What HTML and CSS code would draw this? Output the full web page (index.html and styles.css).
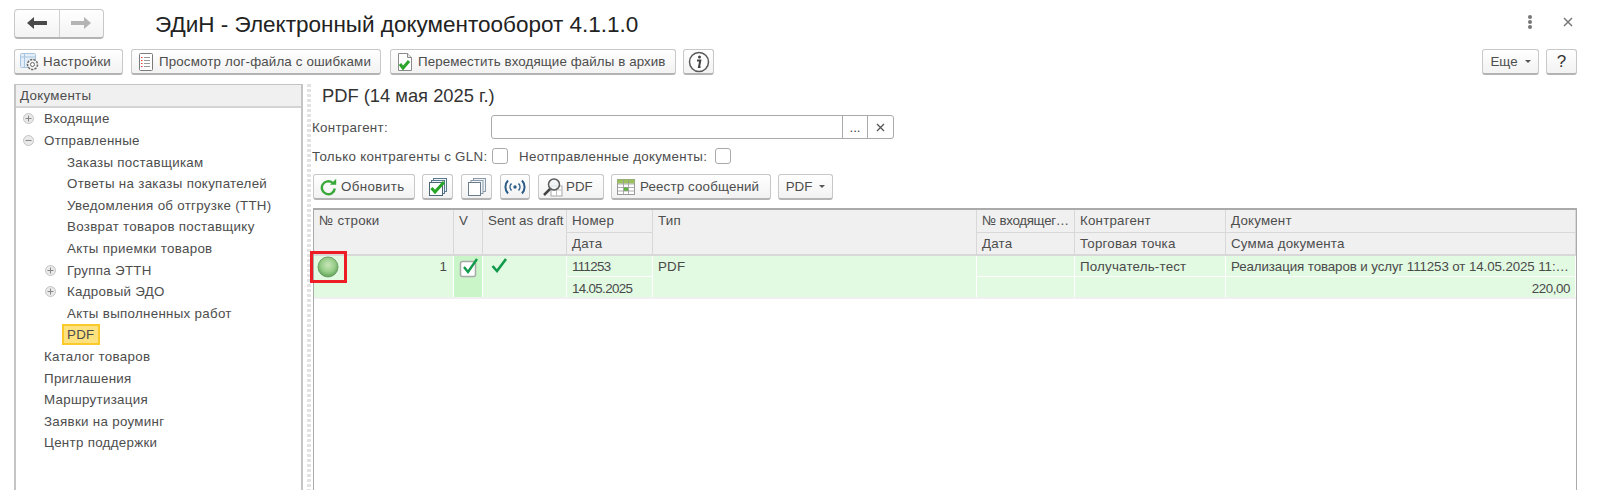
FILE: index.html
```html
<!DOCTYPE html>
<html lang="ru">
<head>
<meta charset="utf-8">
<title>ЭДиН</title>
<link rel="stylesheet" href="styles.css">
</head>
<body>
<div class="app">
  <header class="head">
    <div class="nav">
      <span class="nav-b"><svg width="22" height="14" viewBox="0 0 22 14"><path d="M1 7l7-6v4h13v4H8v4z" fill="#4a4a4a"/></svg></span>
      <span class="nav-b"><svg width="22" height="14" viewBox="0 0 22 14"><path d="M21 7l-7-6v4H1v4h13v4z" fill="#b4b4b4"/></svg></span>
    </div>
    <h1 class="title">ЭДиН - Электронный документооборот 4.1.1.0</h1>
    <span class="dots"><i></i><i></i><i></i></span>
    <svg class="close" width="10" height="10" viewBox="0 0 10 10"><path d="M1 1l8 8M9 1l-8 8" stroke="#777" stroke-width="1.5"/></svg>
  </header>

  <div class="bar">
    <button class="btn w-set"><svg width="20" height="20" viewBox="0 0 20 20"><rect x=".5" y="1.500" width="15" height="14" rx="1" fill="#e4eef8" stroke="#a8c4de"/><path d="M1 5h14M4.500 2v13" stroke="#a8c4de"/><circle cx="12.500" cy="12.500" r="5" fill="#f4f4f4" stroke="#666" stroke-width="1.500" stroke-dasharray="2.300 1.100"/><circle cx="12.500" cy="12.500" r="2" fill="#fff" stroke="#666"/></svg>Настройки</button>
    <button class="btn w-log"><svg width="16" height="20" viewBox="0 0 16 20"><rect x="1.500" y="1.500" width="13" height="17" rx="1" fill="#fff" stroke="#7a7a7a"/><path d="M6 5.500h6M6 8.500h6M6 11.500h6M6 14.500h6" stroke="#9a9a9a"/><path d="M3 5.500h1.500M3 8.500h1.500M3 11.500h1.500M3 14.500h1.500" stroke="#e0403a"/></svg>Просмотр лог-файла с ошибками</button>
    <button class="btn w-mov"><svg width="16" height="20" viewBox="0 0 16 20"><path d="M1.500 1.500h9l4 4v13h-13z" fill="#fff" stroke="#8a8a8a"/><path d="M10.500 1.500v4h4" fill="#e8e8e8" stroke="#8a8a8a"/><path d="M3 12l3 4 6-7" fill="none" stroke="#2aa52a" stroke-width="3"/></svg>Переместить входящие файлы в архив</button>
    <button class="btn w-ico"><svg width="22" height="22" viewBox="0 0 22 22"><circle cx="11" cy="11" r="9.500" fill="#fff" stroke="#5a5a5a" stroke-width="1.500"/><circle cx="11.500" cy="6" r="1.500" fill="#444"/><path d="M9 9.500h3.300l-1.300 6.500h1.500" fill="none" stroke="#444" stroke-width="2"/></svg></button>
    <div class="bar-end">
      <button class="btn w-more">Еще<span class="caret"></span></button>
      <button class="btn w-ico q">?</button>
    </div>
  </div>

  <main class="main">
    <aside class="side">
      <div class="side-h">Документы</div>
      <ul class="tree">
        <li class="n1"><svg class="tg" width="11" height="11" viewBox="0 0 11 11"><circle cx="5.500" cy="5.500" r="5" fill="#e9e9e9" stroke="#c4c4c4"/><path d="M2.500 5.500h6M5.500 2.500v6" stroke="#888"/></svg>Входящие</li>
        <li class="n1"><svg class="tg" width="11" height="11" viewBox="0 0 11 11"><circle cx="5.500" cy="5.500" r="5" fill="#e9e9e9" stroke="#c4c4c4"/><path d="M2.500 5.500h6" stroke="#888"/></svg>Отправленные</li>
        <li class="n2">Заказы поставщикам</li>
        <li class="n2">Ответы на заказы покупателей</li>
        <li class="n2">Уведомления об отгрузке (ТТН)</li>
        <li class="n2">Возврат товаров поставщику</li>
        <li class="n2">Акты приемки товаров</li>
        <li class="n2"><svg class="tg" width="11" height="11" viewBox="0 0 11 11"><circle cx="5.500" cy="5.500" r="5" fill="#e9e9e9" stroke="#c4c4c4"/><path d="M2.500 5.500h6M5.500 2.500v6" stroke="#888"/></svg>Группа ЭТТН</li>
        <li class="n2"><svg class="tg" width="11" height="11" viewBox="0 0 11 11"><circle cx="5.500" cy="5.500" r="5" fill="#e9e9e9" stroke="#c4c4c4"/><path d="M2.500 5.500h6M5.500 2.500v6" stroke="#888"/></svg>Кадровый ЭДО</li>
        <li class="n2">Акты выполненных работ</li>
        <li class="n2"><span class="sel">PDF</span></li>
        <li class="n1">Каталог товаров</li>
        <li class="n1">Приглашения</li>
        <li class="n1">Маршрутизация</li>
        <li class="n1">Заявки на роуминг</li>
        <li class="n1">Центр поддержки</li>
      </ul>
    </aside>
    <div class="split"></div>
    <section class="content">
      <h2 class="sub">PDF (14 мая 2025 г.)</h2>
      <div class="row-f">
        <label class="lbl l-k">Контрагент:</label>
        <div class="input"><span class="in-main"></span><span class="in-b">...</span><span class="in-b in-x"><svg width="9" height="9" viewBox="0 0 9 9"><path d="M1 1l7 7M8 1l-7 7" stroke="#555" stroke-width="1.300"/></svg></span></div>
      </div>
      <div class="row-c">
        <label class="lbl l-g">Только контрагенты с GLN:</label><span class="cb"></span>
        <label class="lbl l-n">Неотправленные документы:</label><span class="cb"></span>
      </div>
      <div class="bar2">
        <button class="btn b-upd"><svg width="17" height="18" viewBox="0 0 17 18"><path d="M14.800 10.500a6.500 6.500 0 1 1-2.200-5.700" fill="none" stroke="#3aa83a" stroke-width="2.400"/><path d="M10 6.700h6.200V.8z" fill="#3aa83a"/></svg>Обновить</button>
        <button class="btn w-ico"><svg width="22" height="20" viewBox="0 0 22 20"><rect x="6.500" y="1.500" width="13" height="13" fill="#eef3f8" stroke="#5a7a90"/><rect x="4.500" y="3.500" width="13" height="13" fill="#eef3f8" stroke="#5a7a90"/><rect x="2.500" y="5.500" width="13" height="13" fill="#fff" stroke="#4a6478"/><path d="M4.500 11l3.500 4 9-10" fill="none" stroke="#27a527" stroke-width="3"/></svg></button>
        <button class="btn w-ico b-m"><svg width="22" height="20" viewBox="0 0 22 20"><rect x="7.500" y="1.500" width="12" height="13" fill="#eef3f8" stroke="#8a9aa8"/><rect x="5" y="3.500" width="12" height="13" fill="#f2f6fa" stroke="#8a9aa8"/><rect x="2.500" y="5.500" width="12" height="13" fill="#fff" stroke="#6c7c8a"/></svg></button>
        <button class="btn w-wave b-m"><svg width="22" height="16" viewBox="0 0 22 16"><circle cx="11" cy="8" r="1.700" fill="#2c5c86"/><path d="M7.500 4.500a5 5 0 0 0 0 7M14.500 4.500a5 5 0 0 1 0 7" fill="none" stroke="#2c5c86" stroke-width="1.500"/><path d="M4 1.500a9.500 9.500 0 0 0 0 13M18 1.500a9.500 9.500 0 0 1 0 13" fill="none" stroke="#2c5c86" stroke-width="2"/></svg></button>
        <button class="btn b-pdf b-m"><svg width="20" height="20" viewBox="0 0 20 20"><rect x="8" y="9" width="11" height="10" fill="#fff" stroke="#a8a8a8"/><path d="M8 13h11M13.500 9v10" stroke="#c0c0c0"/><circle cx="11" cy="7.500" r="5.500" fill="#eef3f6" fill-opacity=".8" stroke="#5a5a5a" stroke-width="1.500"/><path d="M7 12l-6 6" stroke="#444" stroke-width="2.500"/></svg>PDF</button>
        <button class="btn b-reg"><svg width="18" height="16" viewBox="0 0 18 16"><rect x=".5" y=".5" width="17" height="15" fill="#fff" stroke="#9a9a9a"/><rect x=".5" y=".5" width="17" height="4" fill="#9ac25a"/><rect x="6.500" y="8" width="5" height="4" fill="#5cb83c"/><path d="M1 5h16M1 8.500h16M1 12h16M6.500 1v14M11.500 1v14" stroke="#9a9a9a" stroke-width=".8"/></svg>Реестр сообщений</button>
        <button class="btn b-drop">PDF<span class="caret"></span></button>
      </div>
      <div class="table">
        <div class="hc sp"><span>№ строки</span></div>
        <div class="hc sp"><span>V</span></div>
        <div class="hc sp"><span class="draft">Sent as draft</span></div>
        <div class="hc"><span>Номер</span></div>
        <div class="hc sp"><span>Тип</span></div>
        <div class="hc"><span class="tight">№ входящег…</span></div>
        <div class="hc"><span>Контрагент</span></div>
        <div class="hc"><span>Документ</span></div>
        <div class="hc h2 col4"><span>Дата</span></div>
        <div class="hc h2 col6"><span>Дата</span></div>
        <div class="hc h2"><span>Торговая точка</span></div>
        <div class="hc h2"><span>Сумма документа</span></div>

        <div class="bc sp b1"><svg class="ball" width="22" height="22" viewBox="0 0 22 22"><defs><radialGradient id="g" cx=".5" cy=".4" r=".6"><stop offset="0" stop-color="#c8e6b8"/><stop offset=".6" stop-color="#96cc88"/><stop offset="1" stop-color="#5fa055"/></radialGradient></defs><circle cx="11" cy="11" r="10" fill="url(#g)" stroke="#6f9f68"/></svg><span class="num">1</span><span class="mark"></span></div>
        <div class="bc sp bv"><svg width="24" height="22" viewBox="0 0 24 22"><rect x="2.500" y="5.500" width="15" height="15" rx="2" fill="#fff" stroke="#a9a9a9" stroke-width="1.500"/><path d="M6 11l4 5 9-13" fill="none" stroke="#129a4c" stroke-width="2.400"/></svg></div>
        <div class="bc sp"><svg class="tick" width="17" height="15" viewBox="0 0 17 15"><path d="M1.500 8l4.500 5 9-12" fill="none" stroke="#129a4c" stroke-width="2.600"/></svg></div>
        <div class="bc"><span class="dg">111253</span></div>
        <div class="bc sp"><span>PDF</span></div>
        <div class="bc"></div>
        <div class="bc"><span>Получатель-тест</span></div>
        <div class="bc"><span class="doc">Реализация товаров и услуг 111253 от 14.05.2025 11:…</span></div>
        <div class="bc b2 col4"><span class="dg">14.05.2025</span></div>
        <div class="bc b2 col6"></div>
        <div class="bc b2"></div>
        <div class="bc b2 right"><span class="sum">220,00</span></div>
        <div class="strip"></div>
      </div>
    </section>
  </main>
</div>
</body>
</html>
```
FILE: styles.css
```css
* { box-sizing: border-box; }
html, body { margin: 0; padding: 0; }
body { width: 1600px; height: 490px; overflow: hidden; background: #fff; font: 13.33px "Liberation Sans", Arial, sans-serif; color: #4d4d4d; }
.app { display: flex; flex-direction: column; height: 490px; }

.head { display: flex; align-items: center; height: 49px; padding: 9px 0 11px 14px; }
.nav { display: flex; width: 90px; height: 30px; border: 1px solid #c8c8c8; border-bottom: 2px solid #b4b4b4; border-radius: 4px; background: linear-gradient(#fff, #f3f3f3); }
.nav-b { flex: 1; display: flex; align-items: center; justify-content: center; }
.nav-b + .nav-b { border-left: 1px solid #d0d0d0; }
.title { margin: 3px 0 0 51px; font-size: 22.5px; font-weight: 400; color: #222; white-space: nowrap; }
.dots { display: flex; flex-direction: column; gap: 1px; margin-left: auto; margin-top: -4px; }
.dots i { width: 4px; height: 4px; border-radius: 50%; background: #777; display: block; }
.close { margin: -4px 27px 0 31px; }

.bar { display: flex; gap: 7px; height: 26px; padding: 0 23px 0 14px; }
.bar-end { display: flex; gap: 7px; margin-left: auto; }
.btn { display: inline-flex; flex: none; align-items: center; justify-content: center; gap: 3px; height: 26px; padding: 0; border: 1px solid #c8c8c8; border-bottom: 2px solid #b4b4b4; border-radius: 3px; background: linear-gradient(#fff, #f2f2f2); font: inherit; color: #4d4d4d; white-space: nowrap; }
.w-set { width: 109px; justify-content: flex-start; padding-left: 5px; gap: 3px; letter-spacing: .3px; }
.w-log { width: 250px; margin-left: 1px; justify-content: flex-start; padding-left: 6px; gap: 5px; letter-spacing: .15px; }
.w-mov { width: 286px; margin-left: 2px; justify-content: flex-start; padding-left: 6px; gap: 5px; letter-spacing: .1px; }
.w-ico { width: 31px; }
.w-more { width: 57px; gap: 7px; }
.q { font-size: 17px; color: #333; }
.caret { width: 0; height: 0; border: 3px solid transparent; border-top-color: #555; border-bottom: 0; }

.main { flex: 1; display: flex; padding: 9px 23px 0 14px; min-height: 0; }
.side { width: 289px; border: 2px solid #c4c4c4; border-bottom: 0; border-top-width: 1px; letter-spacing: .3px; }
.side-h { height: 23px; padding: 3px 4px; background: #f0f0f0; border-bottom: 2px solid #d4d4d4; }
.tree { list-style: none; margin: 0; padding: .4px 0 0; }
.tree li { position: relative; height: 21.6px; line-height: 21.6px; white-space: nowrap; }
.n1 { padding-left: 28px; }
.n2 { padding-left: 51px; }
.tg { position: absolute; top: 5px; }
.n1 .tg { left: 7px; }
.n2 .tg { left: 29px; }
.sel { display: inline-block; height: 21px; line-height: 17px; margin: 0 0 0 -5px; padding: 0 3px; background: #fde27f; border: 2px solid #fcc92b; }
.split { width: 4px; margin-left: 4px; background: repeating-linear-gradient(#e2e2e2 0 3px, #fff 3px 5px); }
.content { flex: 1; min-width: 0; margin-left: 2px; position: relative; }

.sub { margin: 0 0 0 9px; height: 25px; font-size: 18.33px; line-height: 24px; font-weight: 400; color: #333; }
.row-f { display: flex; align-items: center; height: 24px; margin-top: 6px; }
.lbl { white-space: nowrap; letter-spacing: .3px; }
.l-k { width: 179px; margin-left: -1px; }
.input { display: flex; width: 403px; height: 24px; border: 1px solid #aaa; border-radius: 3px; }
.in-main { flex: 1; }
.in-b { width: 25px; display: flex; align-items: center; justify-content: center; border-left: 1px solid #aaa; color: #444; }
.in-x { width: 26px; }
.row-c { display: flex; align-items: center; height: 16px; margin-top: 9px; }
.cb { flex: none; width: 16px; height: 16px; margin-left: 7px; border: 1px solid #aaa; border-radius: 3px; background: #fff; }
.l-g { width: 173px; margin-left: -1px; }
.l-n { width: 189px; margin-left: 11px; }
.bar2 { display: flex; gap: 7px; height: 26px; margin-top: 10px; }
.b-m { margin-left: 1px; }
.b-upd { width: 102px; justify-content: flex-start; padding-left: 6px; gap: 4px; letter-spacing: .4px; }
.w-wave { width: 30px; }
.b-pdf { width: 66px; justify-content: flex-start; padding-left: 4px; gap: 3px; }
.b-reg { width: 160px; justify-content: flex-start; padding-left: 5px; gap: 5px; letter-spacing: .15px; }
.b-drop { width: 55px; gap: 7px; }

.table { display: grid; grid-template-columns: 140px 29px 84px 86px 324px 98px 151px 1fr; grid-template-rows: 23px 23px 21px 20px 2px 1fr; position: relative; width: 1264px; height: 283px; margin-top: 8px; border: 1px solid #aaa; border-bottom: 0; border-top-width: 2px; letter-spacing: .2px; }
.hc { background: #f0f0f0; border-right: 1px solid #d8d8d8; border-bottom: 1px solid #d8d8d8; padding: 3px 5px; white-space: nowrap; overflow: hidden; }
.hc.h2 { border-bottom-width: 2px; }
.hc.sp { border-bottom-width: 2px; }
.sp { grid-row: span 2; }
.tight { letter-spacing: -.3px; }
.draft { letter-spacing: 0; }
.col4 { grid-column: 4; }
.col6 { grid-column: 6; }
.bc { background: #e2f9e2; border-right: 1px solid #fff; border-bottom: 1px solid #fff; padding: 3px 5px; white-space: nowrap; overflow: hidden; position: relative; color: #4a4a4a; }
.bc.sp { border-bottom: 0; }
.bc.b2 { border-bottom: 0; padding-top: 4px; }
.bv { background: #c9f5c9; padding: 0 4px; }
.b1 { overflow: visible; padding: 0; }
.ball { position: absolute; left: 3px; top: 0; }
.num { position: absolute; right: 6px; top: 3px; }
.mark { position: absolute; left: -4px; top: -5px; width: 37px; height: 32px; border: 3px solid #ee1c25; }
.tick { margin-left: 3px; margin-top: -1px; display: block; }
.right { text-align: right; }
.strip { grid-column: 1 / -1; background: #f0f0f0; }
.doc { letter-spacing: -.1px; }
.dg { letter-spacing: -.65px; }
.sum { letter-spacing: -.4px; }
```
